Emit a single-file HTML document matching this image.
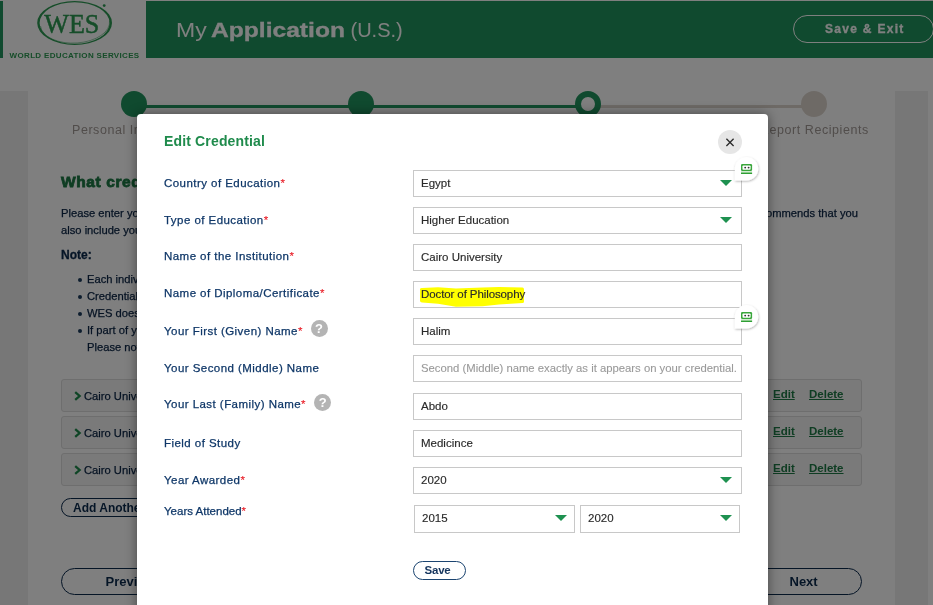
<!DOCTYPE html>
<html><head><meta charset="utf-8">
<style>
*{box-sizing:border-box;margin:0;padding:0}
html,body{width:933px;height:605px;overflow:hidden;background:#fff;font-family:"Liberation Sans",sans-serif}
.abs{position:absolute}
#page{position:absolute;left:0;top:0;width:933px;height:605px;background:#fff;will-change:transform}
#hdrbar{left:0;top:1px;width:3px;height:57px;background:#21945e}
#hdrgreen{left:146px;top:1px;width:787px;height:57px;background:#21945e}
.side{background:#efefef;top:91px;height:514px}
.ttl{top:19px;color:#fff;font-size:20px;white-space:nowrap}
#saveexit{left:793px;top:15px;width:141px;height:28px;border:1px solid #fff;border-radius:14px;color:#fff;font-weight:bold;font-size:12px;letter-spacing:1.3px;padding-left:31px;line-height:26px;-webkit-text-stroke:0.3px #fff}
.circ{width:26px;height:26px;border-radius:50%;background:#21945e;top:91px}
.line{top:105px;height:3px}
.steplbl{top:123px;font-size:12.5px;color:#a29a96;white-space:nowrap;letter-spacing:0.55px}
#overlay{left:0;top:0;width:933px;height:605px;background:rgba(0,0,0,0.5)}
#modal{will-change:transform;left:137px;top:114px;width:631px;height:520px;background:#fff;border-radius:4px;box-shadow:0 0 12px rgba(0,0,0,0.45)}
.lbl{position:absolute;left:27px;font-size:11.5px;color:#0f3768;letter-spacing:0.45px;white-space:nowrap;-webkit-text-stroke:0.25px #0f3768}
.lbl i{font-style:normal;color:#e8141e;-webkit-text-stroke:0.1px #e8141e}
.inp{position:absolute;left:276px;width:329px;height:27px;border:1px solid #c8c8c8;background:#fff;font-size:11.5px;color:#2a2a2a;-webkit-text-stroke:0.15px #2a2a2a;padding-left:7px;line-height:25px;white-space:nowrap}
.arr{position:absolute;right:9.5px;top:9px;width:0;height:0;border-left:6px solid transparent;border-right:6px solid transparent;border-top:6.5px solid #1e9150}
.tight{letter-spacing:0}
.help{position:absolute;width:17px;height:17px;border-radius:50%;background:#b4b4b4;color:#fff;font-weight:bold;font-size:13px;text-align:center;line-height:17.5px}
.hlb{position:absolute;left:6px;top:5px;width:105px;height:20px;background:#ffff00;border-radius:5px 3px 6px 4px}
.ph{color:#9a9a9a;font-size:11.3px;-webkit-text-stroke:0.1px #9a9a9a}
.savebtn{position:absolute;width:53px;height:19px;border:1.5px solid #1b4470;border-radius:10px;color:#15355e;font-weight:bold;font-size:11.5px;letter-spacing:-0.2px;text-indent:-4px;text-align:center;line-height:17.5px}
.closebtn{position:absolute;width:24px;height:24px;border-radius:50%;background:#e6e6e6}
.ptxt{font-size:11.2px;color:#0a2445;white-space:nowrap;letter-spacing:0px;-webkit-text-stroke:0.25px #0a2445}
.bul{list-style:none;font-size:11.2px;color:#0a2445;line-height:17px;white-space:nowrap;letter-spacing:0px;-webkit-text-stroke:0.25px #0a2445}
.bul li{position:relative}
.bul li:before{content:"";position:absolute;left:-9px;top:7px;width:4px;height:4px;border-radius:50%;background:#1b3a5c}
.bul li.nob:before{display:none}
.crow{left:61px;width:801px;height:33px;background:#f5f5f5;border:1px solid #dcdcdc;border-radius:3px}
.chev{position:absolute;left:11.5px;top:11px}
.ctxt{position:absolute;left:22px;top:10px;font-size:11.2px;color:#0a2445;-webkit-text-stroke:0.25px #0a2445;letter-spacing:0px}
.ed,.del{position:absolute;top:7.5px;font-size:11.5px;font-weight:bold;color:#1f7a46;text-decoration:underline}
.ed{left:711px}.del{left:747px}
.pill{border:1.5px solid #0b2a4d;border-radius:14px;color:#0b2a4d;font-weight:bold;font-size:13px;white-space:nowrap}
.rf{position:absolute;width:36px;height:36px}
.rf svg{position:absolute;left:0;top:0}
</style></head>
<body>
<div id="page">
  <div class="abs" id="hdrbar"></div>
  <div class="abs" id="hdrgreen"></div>
  <div class="abs side" style="left:0;width:28px"></div>
  <div class="abs side" style="left:895px;width:33px"></div>
  <svg class="abs" style="left:0;top:0" width="146" height="60" viewBox="0 0 146 60">
    <path fill="#2c9a52" fill-rule="evenodd" d="M37.2 23a37.4 22 0 1 0 74.8 0a37.4 22 0 1 0 -74.8 0Z M39.6 23a35 20.8 0 1 0 70 0a35 20.8 0 1 0 -70 0Z"/>
    <path fill="none" stroke="#2c9a52" stroke-width="0.5" d="M40.5 26a34.5 19.5 -3 1 0 69 -5"/>
    <text x="71.8" y="33.3" text-anchor="middle" font-family="Liberation Serif" font-size="28" fill="#2c9a52" stroke="#2c9a52" stroke-width="0.5" textLength="55" lengthAdjust="spacingAndGlyphs">WES</text>
    <circle cx="104.2" cy="5.6" r="1.4" fill="#2c9a52"/>
    <text x="9.6" y="57.8" font-family="Liberation Sans" font-weight="bold" font-size="8" fill="#2c9a52" textLength="129.6" lengthAdjust="spacing">WORLD EDUCATION SERVICES</text>
  </svg>
  <div class="abs ttl" style="left:176px;font-weight:normal;transform:scaleX(1.15);transform-origin:0 0">My</div>
  <div class="abs ttl" style="left:211px;font-weight:bold;font-size:20.5px;top:18px;transform:scaleX(1.2);transform-origin:0 0;-webkit-text-stroke:0.3px #fff">Application</div>
  <div class="abs ttl" style="left:350.5px">(U.S.)</div>
  <div class="abs" id="saveexit">Save &amp; Exit</div>
  <!-- steps -->
  <div class="abs line" style="left:134px;width:454px;background:#21945e"></div>
  <div class="abs line" style="left:588px;width:226px;background:#ddd5cd"></div>
  <div class="abs circ" style="left:121px"></div>
  <div class="abs circ" style="left:348px"></div>
  <div class="abs circ" style="left:575px;background:#fff;border:6px solid #21945e"></div>
  <div class="abs circ" style="left:801px;background:#ddd5cd"></div>
  <div class="abs" style="left:61px;top:173px;font-size:15.5px;font-weight:bold;color:#1d7a45;white-space:nowrap;letter-spacing:0.6px;-webkit-text-stroke:0.8px #1d7a45">What credentials do you want evaluated?</div>
  <div class="abs ptxt" style="left:61px;top:207px">Please enter your credentials below. WES rec</div>
  <div class="abs ptxt" style="left:61px;top:223.5px">also include your</div>
  <div class="abs ptxt" style="right:75px;top:207px">ommends that you</div>
  <div class="abs" style="left:61px;top:248px;font-size:12px;font-weight:bold;color:#0b2a4d;-webkit-text-stroke:0.3px #0b2a4d">Note:</div>
  <ul class="abs bul" style="left:87px;top:271px">
    <li>Each individual</li><li>Credentials</li><li>WES does not</li><li>If part of your</li><li class="nob">Please note</li>
  </ul>
  <div class="abs crow" style="top:379px"><svg class="chev" width="8" height="10" viewBox="0 0 8 10"><path d="M1.2 1.2L5.6 5L1.2 8.8" stroke="#1f8b4c" stroke-width="2.3" fill="none"/></svg><span class="ctxt">Cairo University</span><span class="ed">Edit</span><span class="del">Delete</span></div>
  <div class="abs crow" style="top:416px"><svg class="chev" width="8" height="10" viewBox="0 0 8 10"><path d="M1.2 1.2L5.6 5L1.2 8.8" stroke="#1f8b4c" stroke-width="2.3" fill="none"/></svg><span class="ctxt">Cairo University</span><span class="ed">Edit</span><span class="del">Delete</span></div>
  <div class="abs crow" style="top:453px"><svg class="chev" width="8" height="10" viewBox="0 0 8 10"><path d="M1.2 1.2L5.6 5L1.2 8.8" stroke="#1f8b4c" stroke-width="2.3" fill="none"/></svg><span class="ctxt">Cairo University</span><span class="ed">Edit</span><span class="del">Delete</span></div>
  <div class="abs pill" style="left:61px;top:498px;width:120px;height:19px;font-size:12px;line-height:18.5px;padding-left:11px">Add Another Credential</div>
  <div class="abs pill" style="left:61px;top:568px;width:180px;height:27px;line-height:26px;padding-left:43.5px">Previous</div>
  <div class="abs pill" style="left:682px;top:568px;width:180px;height:27px;line-height:26px;padding-left:106.5px">Next</div>
  <div class="abs steplbl" style="left:72px">Personal Information</div>
  <div class="abs steplbl" style="left:760px">Report Recipients</div>
</div>
<div class="abs" id="overlay"></div>
<div class="abs" id="modal"><div style="position:absolute;left:0;top:-1px;width:631px;height:520px">
  <div class="abs" style="left:27px;top:20px;font-size:14px;font-weight:bold;color:#1f8b4c;letter-spacing:0.15px">Edit Credential</div>
  <div class="lbl" style="top:63.8px">Country of Education<i>*</i></div>
  <div class="lbl" style="top:100.6px">Type of Education<i>*</i></div>
  <div class="lbl" style="top:137.4px">Name of the Institution<i>*</i></div>
  <div class="lbl" style="top:174.4px">Name of Diploma/Certificate<i>*</i></div>
  <div class="lbl" style="top:211.5px">Your First (Given) Name<i>*</i></div>
  <div class="help" style="left:173.5px;top:207.4px">?</div>
  <div class="lbl" style="top:248.5px">Your Second (Middle) Name</div>
  <div class="lbl" style="top:285.4px">Your Last (Family) Name<i>*</i></div>
  <div class="help" style="left:177.2px;top:281.3px">?</div>
  <div class="lbl" style="top:323.6px">Field of Study</div>
  <div class="lbl" style="top:360.6px">Year Awarded<i>*</i></div>
  <div class="lbl tight" style="top:392.3px">Years Attended<i>*</i></div>
  <div class="inp" style="top:56.5px">Egypt<span class=arr></span></div>
  <div class="inp" style="top:93.5px">Higher Education<span class=arr></span></div>
  <div class="inp" style="top:130.5px">Cairo University</div>
  <div class="inp" style="top:167.5px"><svg style='position:absolute;left:-1px;top:-1px' width='130' height='27'><path d='M7 8.5Q7 7 9 7.1L25 6.3L43 7.4L69.5 6.5L86 5.9L109.5 6.6Q111 6.8 111 8.5L111 20.5Q111 22 109.5 22.1L86 23.4L69.5 25.2L43 25.7L25 22.8L9 21.6Q7 21.4 7 19.8Z' fill='#ffff00'/></svg><span style='position:relative;letter-spacing:-0.1px'>Doctor of Philosophy</span></div>
  <div class="inp" style="top:204.5px">Halim</div>
  <div class="inp" style="top:241.5px"><span class='ph'>Second (Middle) name exactly as it appears on your credential.</span></div>
  <div class="inp" style="top:279.5px">Abdo</div>
  <div class="inp" style="top:316.5px">Medicince</div>
  <div class="inp" style="top:353.5px">2020<span class=arr></span></div>
  <div class="inp" style="left:277px;width:161px;top:391.5px;height:28px">2015<span class="arr" style="right:7.5px"></span></div>
  <div class="inp" style="left:443px;width:160px;top:391.5px;height:28px">2020<span class="arr" style="right:7px"></span></div>
  <div class="savebtn" style="left:276px;top:447.5px">Save</div>
  <div class="closebtn" style="left:581px;top:16.5px"><svg width="24" height="24" viewBox="0 0 24 24" style="position:absolute;left:0;top:0"><path d="M8.4 8.8L15.6 16M15.6 8.8L8.4 16" stroke="#2b2b2b" stroke-width="1.3" fill="none"/></svg></div>
  <div class="rf" style="left:591px;top:37.5px"><svg width="36" height="36" viewBox="0 0 36 36"><defs><filter id="sh" x="-50%" y="-50%" width="200%" height="200%"><feDropShadow dx="0.5" dy="1" stdDeviation="1.3" flood-color="#000" flood-opacity="0.3"/></filter></defs>
<path d="M6.8 17.8 A11.7 11.7 0 1 1 18.5 29.5 L6.8 29.5 Z" fill="#fff" filter="url(#sh)"/>
<rect x="13" y="13" width="11.1" height="7" rx="1.3" fill="#3aa63c"/>
<rect x="14.5" y="14.4" width="8.1" height="4.3" rx="0.8" fill="#fff"/>
<circle cx="17.2" cy="16.6" r="0.95" fill="#333"/><circle cx="20.6" cy="16.6" r="0.95" fill="#333"/>
<rect x="13" y="20.6" width="11.1" height="1.3" fill="#8fcf90"/>
<rect x="13" y="21.9" width="11.1" height="1.1" fill="#2f9f35"/></svg></div>
  <div class="rf" style="left:591px;top:185.5px"><svg width="36" height="36" viewBox="0 0 36 36"><defs><filter id="sh" x="-50%" y="-50%" width="200%" height="200%"><feDropShadow dx="0.5" dy="1" stdDeviation="1.3" flood-color="#000" flood-opacity="0.3"/></filter></defs>
<path d="M6.8 17.8 A11.7 11.7 0 1 1 18.5 29.5 L6.8 29.5 Z" fill="#fff" filter="url(#sh)"/>
<rect x="13" y="13" width="11.1" height="7" rx="1.3" fill="#3aa63c"/>
<rect x="14.5" y="14.4" width="8.1" height="4.3" rx="0.8" fill="#fff"/>
<circle cx="17.2" cy="16.6" r="0.95" fill="#333"/><circle cx="20.6" cy="16.6" r="0.95" fill="#333"/>
<rect x="13" y="20.6" width="11.1" height="1.3" fill="#8fcf90"/>
<rect x="13" y="21.9" width="11.1" height="1.1" fill="#2f9f35"/></svg></div>
</div></div>
</body></html>
